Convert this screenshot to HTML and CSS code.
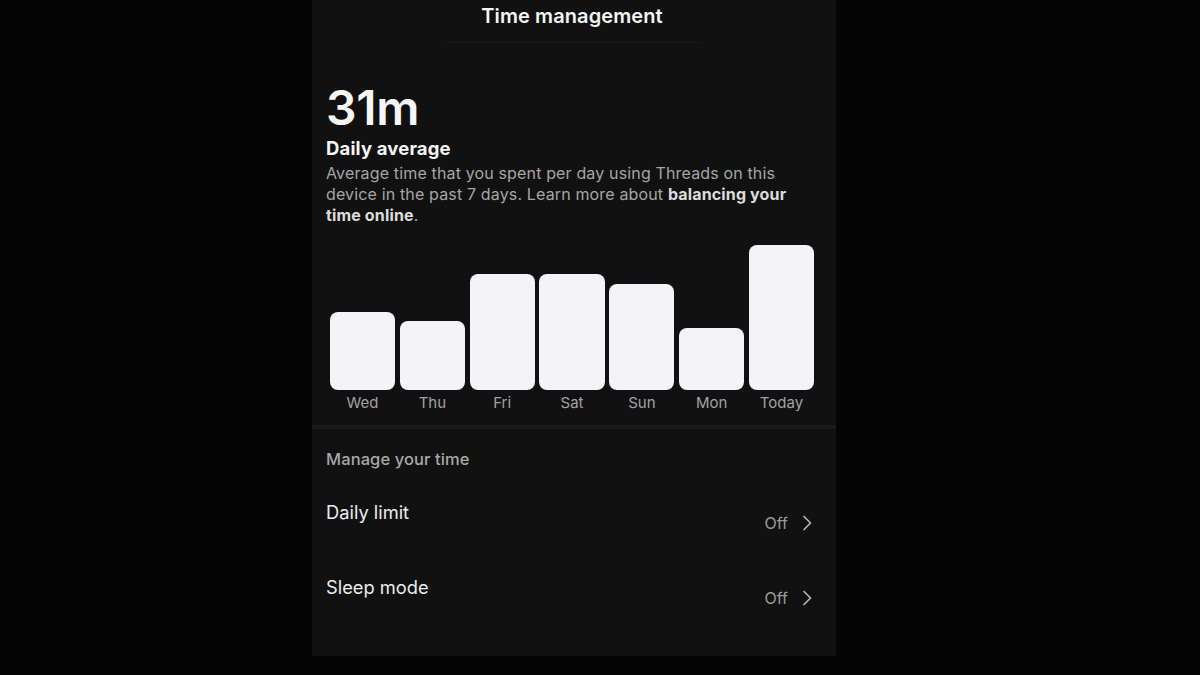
FILE: index.html
```html
<!DOCTYPE html>
<html>
<head>
<meta charset="utf-8">
<link rel="stylesheet" href="styles.css">
</head>
<body>
<div class="panel">
  <header class="top">
    <div class="title">Time management</div>
    <div class="title-line"></div>
  </header>
  <section class="summary">
    <div class="big">31m</div>
    <div class="sub">Daily average</div>
    <p class="desc">Average time that you spent per day using Threads on this device in the past 7 days. Learn more about <b>balancing your time online</b>.</p>
  </section>
  <section class="chart">
    <div class="col"><div class="bar" style="height:78px"></div><span>Wed</span></div>
    <div class="col"><div class="bar" style="height:69px"></div><span>Thu</span></div>
    <div class="col"><div class="bar" style="height:116px"></div><span>Fri</span></div>
    <div class="col"><div class="bar" style="height:116px"></div><span>Sat</span></div>
    <div class="col"><div class="bar" style="height:106px"></div><span>Sun</span></div>
    <div class="col"><div class="bar" style="height:62px"></div><span>Mon</span></div>
    <div class="col"><div class="bar" style="height:145px"></div><span>Today</span></div>
  </section>
  <div class="divider"></div>
  <section class="manage">
    <div class="section-title">Manage your time</div>
    <div class="row">
      <div class="label">Daily limit</div>
      <div class="value">Off <svg class="chev" viewBox="0 0 10 16" width="10" height="16"><path d="M2 1.5 L8.5 8 L2 14.5" fill="none" stroke="#b4b4b4" stroke-width="1.7" stroke-linecap="round" stroke-linejoin="round"/></svg></div>
    </div>
    <div class="row">
      <div class="label">Sleep mode</div>
      <div class="value">Off <svg class="chev" viewBox="0 0 10 16" width="10" height="16"><path d="M2 1.5 L8.5 8 L2 14.5" fill="none" stroke="#b4b4b4" stroke-width="1.7" stroke-linecap="round" stroke-linejoin="round"/></svg></div>
    </div>
  </section>
</div>
</body>
</html>
```
FILE: styles.css
```css
html, body {
  margin: 0;
  padding: 0;
  background: #040404;
  height: 100%;
}
body {
  font-family: Inter, "Noto Sans", sans-serif;
  color: #f2f2f2;
}
.panel {
  margin-left: 312px;
  width: 524px;
  height: 656px;
  background: #111111;
  box-sizing: border-box;
}
.top {
  padding-top: 4px;
  padding-right: 4px;
  display: flex;
  flex-direction: column;
  align-items: center;
}
.title {
  font-size: 20px;
  font-weight: 600;
  line-height: 24px;
  color: #f4f4f4;
  letter-spacing: 0.1px;
}
.title-line {
  margin-top: 14px;
  margin-left: 4px;
  width: 254px;
  height: 1px;
  background: #1a1a1a;
}
.summary {
  padding: 40px 22px 0 14px;
}
.big {
  font-size: 48px;
  font-weight: 600;
  line-height: 50px;
  letter-spacing: -0.3px;
  color: #f6f6f6;
}
.sub {
  margin-top: 4px;
  font-size: 18.5px;
  font-weight: 700;
  line-height: 22px;
  letter-spacing: 0.15px;
  color: #f4f4f4;
}
.desc {
  margin: 4px 0 0;
  font-size: 16px;
  line-height: 21px;
  color: #a6a6a6;
  letter-spacing: 0.15px;
}
.desc b {
  color: #dcdcdc;
  font-weight: 700;
}
.chart {
  margin-top: 16px;
  padding: 0 22px 0 18px;
  height: 170px;
  display: flex;
  gap: 4.8px;
  align-items: flex-end;
}
.col {
  flex: 1;
  display: flex;
  flex-direction: column;
  align-items: stretch;
}
.bar {
  background: #f4f4f8;
  border-radius: 8px;
}
.col span {
  margin-top: 4px;
  text-align: center;
  font-size: 15px;
  line-height: 18px;
  color: #a2a2a2;
}
.divider {
  margin-top: 13px;
  height: 4px;
  background: #1b1b1b;
}
.manage {
  padding: 20px 24px 0 14px;
}
.section-title {
  font-size: 16.5px;
  font-weight: 500;
  color: #a8a8a8;
  line-height: 20px;
  letter-spacing: 0.1px;
}
.row {
  margin-top: 32px;
  display: flex;
  justify-content: space-between;
  align-items: flex-start;
  height: 43px;
}
.label {
  font-size: 18.3px;
  line-height: 22px;
  color: #ececec;
}
.value {
  margin-top: 11px;
  display: flex;
  align-items: center;
  gap: 14px;
  font-size: 16px;
  line-height: 22px;
  color: #9c9c9c;
}
.chev {
  display: block;
}
```
